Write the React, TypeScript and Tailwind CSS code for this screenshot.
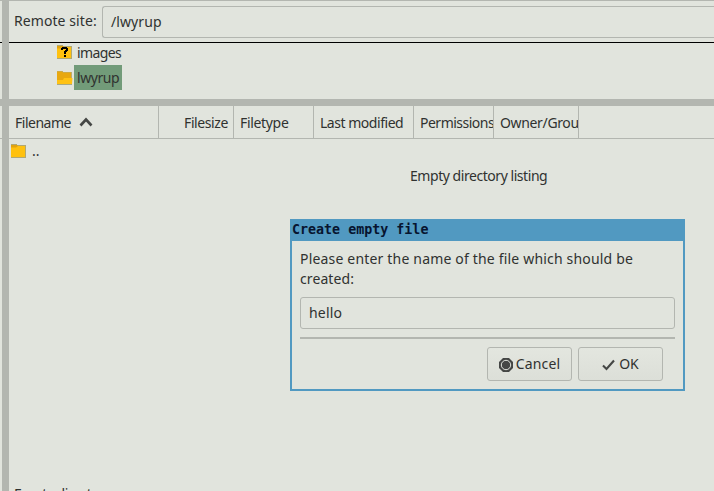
import React from "react";

const ui = "font-['Noto_Sans',sans-serif]";

function FolderClosed({ question = false }: { question?: boolean }) {
  return (
    <svg width="16" height="16" viewBox="0 0 16 16" className="shrink-0">
      <path d="M1 1h6v1h9v13H1z" fill="#b0a874" />
      <path d="M1 2h6l1 1h7v3H1z" fill="#e2a30f" />
      <path d="M1 4.500h5l2-1.500h7v11H1z" fill="#ffc10f" />
      {question && (
        <path d="M6 3h5v1h1v3h-1v1h-1v2H8V7h1V6h1V5H7v1H5V4h1zM8 11h2v2H8z" fill="#000" shapeRendering="crispEdges" />
      )}
    </svg>
  );
}

function FolderOpen() {
  return (
    <svg width="17" height="16" viewBox="0 0 17 16" className="relative z-10 shrink-0">
      <path d="M1 1h6v1h9v6H1z" fill="#b9ad72" />
      <path d="M1 1.500h5l1 1h8V14H1z" fill="#e8a810" />
      <path d="M1 14V10h6l1-2h8.500l-.5 6z" fill="#ffc214" />
      <path d="M1 14.500h15" stroke="#aaa982" />
    </svg>
  );
}

const columns = [
  { name: "Filename", box: "w-[150px] pl-1.5", text: "tracking-[-0.5px]", sorted: true },
  { name: "Filesize", box: "w-[75px] justify-end pr-[5px]", text: "tracking-[-0.4px]" },
  { name: "Filetype", box: "w-[80px] pl-1.5", text: "tracking-[-0.33px]" },
  { name: "Last modified", box: "w-[100px] pl-1.5", text: "tracking-[-0.47px]" },
  { name: "Permissions", box: "w-[80px] pl-1.5", text: "tracking-[-0.5px]" },
  { name: "Owner/Grou", box: "w-[85px] pl-1.5", text: "tracking-[-0.35px]" },
];

function Dialog() {
  return (
    <div className="absolute left-[290px] top-[219px] flex h-[172px] w-[395px] flex-col border-2 border-[#5199c1] bg-[#e1e4dd]">
      <div className="h-5 shrink-0 bg-[#5199c1] font-['DejaVu_Sans_Mono',monospace] text-[13.33px] font-bold leading-[18px] text-[#07142f]">
        Create empty file
      </div>
      <div className="flex flex-col px-2 pt-2">
        <div className="h-10 whitespace-nowrap text-[14px] leading-5">
          <div className="tracking-[0.18px]">Please enter the name of the file which should be</div>
          <div className="tracking-[0.1px]">created:</div>
        </div>
        <div className="mt-2 flex h-8 items-center rounded-[3px] border border-[#b3b6b0] px-2 pb-0.5 text-[14px] tracking-[0.2px]">hello</div>
        <div className="mt-2 h-0.5 bg-[#b3b6b0]" />
        <div className="mt-2 flex justify-end gap-1.5 pr-3 text-[14px]">
          <button className="flex h-[34px] w-[85px] items-center justify-center gap-[3px] rounded-[3px] border border-[#b3b6b0] bg-linear-to-b from-[#e3e6df] to-[#dcdfd8]">
            <svg width="14" height="14" viewBox="0 0 14 14" className="mt-px">
              <path d="M4 0h6l4 4v6l-4 4H4L0 10V4z" fill="#454745" />
              <circle cx="7" cy="7" r="4.7" fill="#454745" stroke="#e1e4dd" />
            </svg>
            <span className="pb-0.5 tracking-[0.15px]">Cancel</span>
          </button>
          <button className="flex h-[34px] w-[85px] items-center justify-center gap-1 rounded-[3px] border border-[#b3b6b0] bg-linear-to-b from-[#e3e6df] to-[#dcdfd8]">
            <svg width="13" height="12" viewBox="0 0 13 12" className="mt-0.5">
              <path d="M1 6.500l3.500 3.500L12 1.500" fill="none" stroke="#454745" strokeWidth="2.1" />
            </svg>
            <span className="pb-0.5">OK</span>
          </button>
        </div>
      </div>
    </div>
  );
}

export default function App() {
  return (
    <div className={`relative flex h-[491px] w-[714px] overflow-hidden bg-[#e1e4dd] text-[#303230] ${ui}`}>
      <div className="flex w-0.5 shrink-0 flex-col">
        <div className="h-[42px] border-t border-[#b3b6b0]" />
        <div className="h-[57px] border-t border-black" />
        <div className="h-[7px] bg-[#b3b6b0]" />
        <div className="h-[33px] border-b border-[#b3b6b0]" />
      </div>
      <div className="w-[7px] shrink-0 bg-[#b3b6b0]" />
      <div className="flex w-[705px] shrink-0 flex-col">
        <div className="flex h-[42px] shrink-0 border-t border-[#b3b6b0] pl-[5px] pt-[5px] text-[14px]">
          <label className="w-[88px] whitespace-nowrap leading-[30px] tracking-[0.08px]">Remote site:</label>
          <div className="h-8 flex-1 rounded-l-[3px] border border-r-0 border-[#b3b6b0] pl-2 leading-[30px] tracking-[0.1px]">/lwyrup</div>
        </div>
        <div className="flex h-[57px] shrink-0 flex-col border-t border-black pl-[47px] text-[14px]">
          <div className="flex h-[22px] items-start">
            <div className="pt-px">
              <FolderClosed question />
            </div>
            <span className="ml-[5px] leading-5 tracking-[-0.6px]">images</span>
          </div>
          <div className="flex h-[25px] items-center">
            <FolderOpen />
            <span className="flex h-[25px] w-[48px] items-center bg-[#729b79] pl-[3px] tracking-[-0.45px] ml-px">lwyrup</span>
          </div>
        </div>
        <div className="h-[7px] shrink-0 bg-[#b3b6b0]" />
        <div className="flex h-[33px] shrink-0 border-b border-[#b3b6b0] text-[14px]">
          {columns.map((c) => (
            <div key={c.name} className={`flex shrink-0 items-center overflow-hidden whitespace-nowrap border-r border-[#b3b6b0] ${c.box}`}>
              <span className={c.text}>{c.name}</span>
              {c.sorted && (
                <svg width="14" height="10" viewBox="0 0 14 10" className="ml-2">
                  <path d="M1.500 8.500L7 2.500l5.500 6" fill="none" stroke="#454745" strokeWidth="2.6" />
                </svg>
              )}
            </div>
          ))}
        </div>
        <div className="flex h-[25px] shrink-0 items-start pl-px pt-1 text-[14px]">
          <FolderClosed />
          <span className="ml-[6px] leading-4">..</span>
        </div>
        <div className="h-6 shrink-0 pl-[401px] text-[14px] leading-6 tracking-[-0.45px]">Empty directory listing</div>
        <div className="mt-[296px] h-[19px] shrink-0 whitespace-nowrap pl-[5px] text-[14px] leading-[19px] tracking-[-0.45px]">Empty directory.</div>
      </div>
      <Dialog />
    </div>
  );
}
